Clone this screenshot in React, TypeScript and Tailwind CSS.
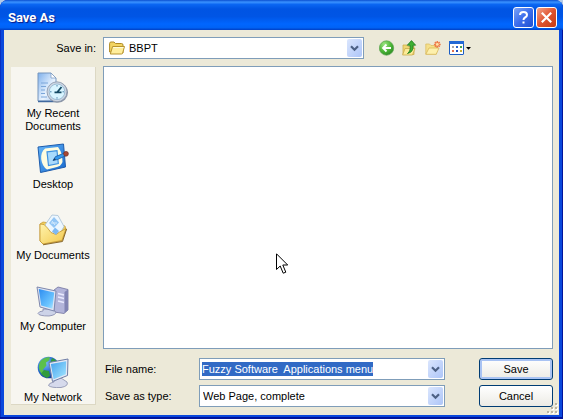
import { useEffect, useRef } from "react";
import type { ReactNode } from "react";

function Chevron() {
  return (
    <span className="pointer-events-none flex h-[18px] w-[15px] shrink-0 items-center justify-center rounded-xs bg-linear-to-br from-[#dbe6fd] to-[#adc5f8]">
      <svg width="9" height="7" viewBox="0 0 9 7" aria-hidden="true">
        <path d="M1 1.2 4.5 4.7 8 1.2" fill="none" stroke="#4d6185" strokeWidth="2.2" />
      </svg>
    </span>
  );
}

function FolderIcon() {
  return (
    <svg width="16" height="16" viewBox="0 0 16 16" aria-hidden="true">
      <path d="M.6 12V3.5Q.6 2 2 2H5L6.5 3.5H12.5Q14 3.5 14 5V13Z" fill="#f3d461" stroke="#b08b28" />
      <path d="M1.3 14 3.6 6.5H15.5L13.6 13.2Q13.4 14 12.6 14Z" fill="#ffee9c" stroke="#b8942f" />
      <path d="M4.2 7.5H14.4" stroke="#fffbd8" />
    </svg>
  );
}

function BackIcon() {
  return (
    <svg width="16" height="16" viewBox="0 0 16 16" aria-hidden="true">
      <defs>
        <radialGradient id="back" cx="35%" cy="25%" r="80%">
          <stop offset="0" stopColor="#9be382" />
          <stop offset=".6" stopColor="#4bb535" />
          <stop offset="1" stopColor="#2c8a25" />
        </radialGradient>
      </defs>
      <circle cx="7.5" cy="8" r="7.2" fill="url(#back)" stroke="#5ba350" strokeWidth=".7" />
      <path d="M7.5 4.5 4 8 7.5 11.5M4.5 8H12" fill="none" stroke="#fff" strokeWidth="1.8" />
    </svg>
  );
}

function UpIcon() {
  return (
    <svg width="16" height="16" viewBox="0 0 16 16" aria-hidden="true">
      <path d="M1 5H5L6 6.5H12V14.5H1Z" fill="#f0d673" stroke="#cfae4c" strokeWidth=".8" />
      <path d="M.6 15 3 8.5H13L10.5 15Z" fill="#fbea96" stroke="#c9aa4c" strokeWidth=".8" />
      <path d="M5.5 13.5Q9 11 8 5.2H5.3L9.5.6 13.6 5.2H11Q12 12 5.5 13.5Z" fill="#3fb032" stroke="#1b7a1a" strokeWidth=".8" />
    </svg>
  );
}

function NewFolderIcon() {
  return (
    <svg width="17" height="16" viewBox="0 0 17 16" aria-hidden="true">
      <path d="M.8 14V4H4.5L6 5.5H11.5V14Z" fill="#f5e08a" stroke="#dcbf66" strokeWidth=".8" />
      <path d="M.8 14.3 4 8H14L11.2 14.3Z" fill="#fdf0ac" stroke="#d8b757" strokeWidth=".8" />
      <path d="M12.3 1V7.8M8.9 4.4H15.7M9.9 2 14.7 6.8M14.7 2 9.9 6.8" stroke="#ee7a48" strokeWidth="1.5" />
      <circle cx="12.3" cy="4.4" r="1.4" fill="#ffe2a8" />
    </svg>
  );
}

function ViewsIcon() {
  return (
    <svg width="23" height="16" viewBox="0 0 23 16" aria-hidden="true">
      <rect x=".5" y="1.5" width="14" height="13" rx=".5" fill="#fff" stroke="#1b5dc4" />
      <path d="M0 1H15V4H0Z" fill="#2268d4" />
      <path d="M3 6H5V8H3Z" fill="#a8a8a8" />
      <path d="M7 6H9V8H7Z" fill="#2d63c8" />
      <path d="M11 6H13V8H11Z" fill="#46a34b" />
      <path d="M3 10H5V12H3Z" fill="#e0704f" />
      <path d="M7 10H9V12H7Z" fill="#1f4dc0" />
      <path d="M11 10H13V12H11Z" fill="#c9ae31" />
      <path d="M17 7H22L19.5 9.8Z" fill="#000" />
    </svg>
  );
}

function RecentIcon() {
  return (
    <svg width="32" height="32" viewBox="0 0 32 32" aria-hidden="true">
      <defs>
        <linearGradient id="page" x1="0" y1="0" x2="1" y2="1">
          <stop offset="0" stopColor="#7eb0ec" />
          <stop offset=".6" stopColor="#eaf4ff" />
          <stop offset="1" stopColor="#a9c8ee" />
        </linearGradient>
      </defs>
      <path d="M1 1H14L19 6V29H1Z" fill="url(#page)" stroke="#7796bd" />
      <path d="M1 29.5H20" stroke="#41699f" strokeWidth="1.5" />
      <path d="M14 1V6H19Z" fill="#fff" stroke="#7796bd" strokeWidth=".7" />
      <path d="M4 11H11M4 14.5H9M4 18H8M4 21.5H8M4 25H10" stroke="#7ba6d9" strokeWidth="1.2" />
      <circle cx="20.8" cy="20.6" r="10.2" fill="#8d97a7" />
      <circle cx="20" cy="19.8" r="10" fill="#ccd5e2" stroke="#8896aa" strokeWidth=".8" />
      <circle cx="20" cy="19.8" r="7.8" fill="#d9f5ff" stroke="#8fb2cd" strokeWidth=".8" />
      <path d="M20 13V14.5M20 25.2V26.7M13 19.8H14.5M25.5 19.8H27" stroke="#4f86ad" />
      <path d="M24.5 15 20 20.5M24.5 20.3H17.5" stroke="#154a63" strokeWidth="1.8" />
    </svg>
  );
}

function DesktopIcon() {
  return (
    <svg width="32" height="32" viewBox="0 0 32 32" aria-hidden="true">
      <defs>
        <linearGradient id="desk" x1="0" y1="0" x2="1" y2="1">
          <stop offset="0" stopColor="#65b6fa" />
          <stop offset="1" stopColor="#1669cd" />
        </linearGradient>
      </defs>
      <path d="M1 4 26.5 1 28.5 24 3.5 29.5Z" fill="url(#desk)" stroke="#1d5cad" />
      <path d="M8 5.5 21 4Q24 8 25 12L25.5 19Q24 23 20 24L10 26.5Q5 23 4.2 16 3.7 9 8 5.5Z" fill="#fffde0" />
      <path d="M10 8.8 20 7.6 21.3 20.5 11.5 22.5Z" fill="#a9dafc" stroke="#3f92e0" strokeWidth="1.2" />
      <path d="M16 17.5 18.5 13.6 28 9.8 29.7 12.3 20.5 16.5Z" fill="#3598ed" stroke="#1c579d" strokeWidth=".8" />
      <path d="M16 17.5 17.7 15 18.8 16.7Z" fill="#183d62" />
      <circle cx="29" cy="10.8" r="2.4" fill="#a94835" stroke="#743123" strokeWidth=".7" />
    </svg>
  );
}

function DocumentsIcon() {
  return (
    <svg width="32" height="32" viewBox="0 0 32 32" aria-hidden="true">
      <defs>
        <linearGradient id="docs" x1="0" y1="0" x2="1" y2="1">
          <stop offset="0" stopColor="#fff3ac" />
          <stop offset="1" stopColor="#f2c84c" />
        </linearGradient>
      </defs>
      <path d="M3 10 6 8 12 9 28 12 29 16 25 27 6 30 3 27Z" fill="#f2cf5c" stroke="#c79f3d" strokeWidth=".8" />
      <path d="M8 11 15 1 21 1.5 27 12.5 20 25 9 19Z" fill="#edf7ff" stroke="#a6bfd4" strokeWidth=".8" />
      <path d="M12 9 17 3 22 8.5 17 14Z" fill="#93c6f5" />
      <path d="M14 9H20M15 7 18 11" stroke="#d6ebfd" />
      <path d="M3 10 7 10.5 10.5 14 14 18.5 19 20.5 22.5 18 29 14.5 25 26.5 6 30 3 27Z" fill="url(#docs)" stroke="#c3962f" strokeWidth=".8" />
      <path d="M15 17.5 18 13.5 22 17 19 21Z" fill="#7db9f3" />
      <path d="M6 30.8 25.5 27.5 29.6 15" fill="none" stroke="#8a6a2e" />
    </svg>
  );
}

function ComputerIcon() {
  return (
    <svg width="34" height="32" viewBox="0 0 34 32" aria-hidden="true">
      <defs>
        <linearGradient id="pc" x1="0" y1="0" x2="1" y2="1">
          <stop offset="0" stopColor="#2d8cf0" />
          <stop offset=".7" stopColor="#6cc5ff" />
          <stop offset="1" stopColor="#b7e8ff" />
        </linearGradient>
      </defs>
      <path d="M18 5 22 2 32 4.5V25L28 28.5 18 27Z" fill="#b3b5da" stroke="#72749f" strokeWidth=".8" />
      <path d="M28.5 7 32 4.5V25L28.5 28Z" fill="#8184b3" />
      <path d="M22 8.5 28 10M22 12 28 13.5M22 16 28 17.5" stroke="#e9eaff" strokeWidth="1.3" />
      <path d="M7 24 15 24 20 27Q20 30 13 31 3 31 2 28.5 3 26 7 26Z" fill="#cdd3e8" stroke="#8287a9" strokeWidth=".8" />
      <path d="M1 2 20 6 18 26 4 22Z" fill="#dfe4f3" stroke="#7e88ad" />
      <path d="M2.8 4 18.2 7.4 16.4 23.8 5.2 20.6Z" fill="url(#pc)" />
    </svg>
  );
}

function NetworkIcon() {
  return (
    <svg width="34" height="32" viewBox="0 0 34 32" aria-hidden="true">
      <defs>
        <radialGradient id="globe" cx="35%" cy="30%" r="75%">
          <stop offset="0" stopColor="#82bdfc" />
          <stop offset=".6" stopColor="#2468cf" />
          <stop offset="1" stopColor="#153b94" />
        </radialGradient>
        <linearGradient id="net" x1="0" y1="0" x2="1" y2="1">
          <stop offset="0" stopColor="#43a1ee" />
          <stop offset="1" stopColor="#a6e8ff" />
        </linearGradient>
      </defs>
      <circle cx="12.5" cy="11.5" r="10.8" fill="url(#globe)" />
      <path d="M4.5 5Q9 .5 14 1.3L13 4.5 10 6.5 10.5 9.5 7 13.5 9 17.5 6 18.5Q.5 12.5 4.5 5Z" fill="#5cc04b" />
      <path d="M16 2Q21 4 22.5 8L18 10 14 7ZM8 14 13 15 14 20 11 22Q7 20.5 5 17.5Z" fill="#319b3c" />
      <path d="M18 23 25 22 31 26Q33 30 25 31.5 15 32 12.5 29.5 12.5 27 18 26Z" fill="#d6daec" stroke="#888eac" strokeWidth=".8" />
      <path d="M13 6.5 32 3 31.5 19.5 16.5 25.5Z" fill="#e4e9f5" stroke="#6f7da5" />
      <path d="M14.8 8.1 30.2 5.2 29.8 18.3 17.6 23.3Z" fill="url(#net)" />
    </svg>
  );
}

const places: { name: string; lines: string[]; icon: ReactNode }[] = [
  { name: "recent", lines: ["My Recent", "Documents"], icon: <RecentIcon /> },
  { name: "desktop", lines: ["Desktop"], icon: <DesktopIcon /> },
  { name: "documents", lines: ["My Documents"], icon: <DocumentsIcon /> },
  { name: "computer", lines: ["My Computer"], icon: <ComputerIcon /> },
  { name: "network", lines: ["My Network"], icon: <NetworkIcon /> },
];

export default function App() {
  const fileName = useRef<HTMLInputElement>(null);

  useEffect(() => {
    fileName.current?.focus();
    fileName.current?.select();
  }, []);

  return (
    <div className="flex min-h-screen flex-col bg-[#b4cbe8] font-['Liberation_Sans',Arial,sans-serif] text-[11px] leading-[13px] text-black">
      <div className="flex flex-1 flex-col rounded-t-lg bg-[#0a48dc] shadow-[inset_-1px_-2px_0_#00149c,inset_1px_0_0_#0a2fc0]">
        <header className="flex h-[30px] items-center justify-between rounded-t-lg bg-[linear-gradient(to_bottom,#0a4fd0_0%,#3a92ff_7%,#0a66f2_15%,#0054e3_30%,#0055e5_55%,#0066ff_80%,#0062f5_92%,#003fc4_100%)] pt-1 pr-[6px] pl-2">
          <h1 className="font-[Roboto,sans-serif] text-[13px] font-bold text-white [text-shadow:1px_1px_1px_#0a1883]">Save As</h1>
          <div className="flex gap-[2px]">
            <button type="button" aria-label="Help" className="flex size-[21px] items-center justify-center rounded-[3px] border border-white bg-linear-to-br from-[#7ba2f5] via-[#3c6dec] to-[#1f4fd0]">
              <svg width="15" height="15" viewBox="0 0 15 15" aria-hidden="true">
                <path d="M4 5Q4 2 7.5 2T11 5Q11 6.6 9 7.5 7.5 8.3 7.5 10" fill="none" stroke="#fff" strokeWidth="2" />
                <path d="M6.5 11.5H8.5V13.5H6.5Z" fill="#fff" />
              </svg>
            </button>
            <button type="button" aria-label="Close" className="flex size-[21px] items-center justify-center rounded-[3px] border border-white bg-linear-to-br from-[#f0a188] via-[#e0532f] to-[#c43a12]">
              <svg width="13" height="13" viewBox="0 0 13 13" aria-hidden="true">
                <path d="M1.8 1.8 11.2 11.2M11.2 1.8 1.8 11.2" stroke="#fff" strokeWidth="2.2" />
              </svg>
            </button>
          </div>
        </header>

        <main className="relative mx-1 mb-1 flex flex-1 flex-col bg-[#ece9d8] pt-[7px] pr-[6px] pb-2">
          <div className="flex items-center">
            <label htmlFor="folder" className="w-[92px] text-right">Save in:</label>
            <div className="ml-[7px] grid h-[22px] w-[261px] grid-cols-1 items-center border border-[#7f9db9] bg-white pr-px">
              <select id="folder" className="col-start-1 row-start-1 h-5 w-full appearance-none bg-transparent pl-[25px] outline-none">
                <option>BBPT</option>
              </select>
              <span className="pointer-events-none col-start-1 row-start-1 flex items-center justify-between pl-[5px]">
                <FolderIcon />
                <Chevron />
              </span>
            </div>
            <div className="ml-[15px] flex items-center gap-[7px]">
              <button type="button" aria-label="Back"><BackIcon /></button>
              <button type="button" aria-label="Up one level"><UpIcon /></button>
              <button type="button" aria-label="Create new folder"><NewFolderIcon /></button>
              <button type="button" aria-label="Views"><ViewsIcon /></button>
            </div>
          </div>

          <div className="mt-[7px] flex flex-1 gap-[7px]">
            <nav className="mt-px mb-[2px] ml-[7px] w-[85px] shrink-0 border-r border-b border-[#dcd8c4] bg-[#f7f6f0] pt-[5px]">
              {places.map((place) => (
                <button key={place.name} type="button" className="flex h-[71px] w-full flex-col items-center gap-[3px] last:h-auto">
                  {place.icon}
                  <span>
                    {place.lines.map((line) => (
                      <span key={line} className="block whitespace-nowrap">{line}</span>
                    ))}
                  </span>
                </button>
              ))}
            </nav>

            <div className="flex flex-1 flex-col">
              <div role="listbox" aria-label="Files" className="min-h-[120px] flex-1 border border-[#7f9db9] bg-white" />
              <div className="mt-[9px] grid grid-cols-[96px_1fr_74px] items-center gap-y-[5px]">
                <label htmlFor="file-name" className="pl-[2px]">File name:</label>
                <div className="mr-[34px] flex h-[22px] items-center border border-[#7f9db9] bg-white pr-px pl-[2px]">
                  <input
                    id="file-name"
                    ref={fileName}
                    type="text"
                    autoComplete="off"
                    spellCheck={false}
                    defaultValue="Fuzzy Software  Applications menu"
                    className="min-w-0 flex-1 bg-white leading-[14px] outline-none selection:bg-[#316ac5] selection:text-white"
                  />
                  <Chevron />
                </div>
                <button type="submit" className="h-[22px] rounded-[3px] border border-[#003c74] bg-linear-to-b from-white to-[#ecebe5] shadow-[inset_0_0_0_2px_#a9c3f3]">Save</button>

                <label htmlFor="file-type" className="pl-[2px]">Save as type:</label>
                <div className="mr-[34px] grid h-[22px] grid-cols-1 items-center border border-[#7f9db9] bg-white pr-px">
                  <select id="file-type" className="col-start-1 row-start-1 h-5 w-full appearance-none bg-transparent pl-[3px] outline-none">
                    <option>Web Page, complete</option>
                  </select>
                  <span className="pointer-events-none col-start-1 row-start-1 flex justify-end">
                    <Chevron />
                  </span>
                </div>
                <button type="button" className="h-[22px] rounded-[3px] border border-[#003c74] bg-linear-to-b from-white to-[#ecebe5]">Cancel</button>
              </div>
            </div>
          </div>

          <svg className="absolute right-px bottom-px" width="12" height="12" viewBox="0 0 12 12" aria-hidden="true">
            <path d="M9 1H11V3H9ZM9 5H11V7H9ZM5 5H7V7H5ZM9 9H11V11H9ZM5 9H7V11H5ZM1 9H3V11H1Z" fill="#b8b4a2" />
            <path d="M11 3V2H12V4H10V3ZM11 7V6H12V8H10V7ZM7 7V6H8V8H6V7ZM11 11V10H12V12H10V11ZM7 11V10H8V12H6V11ZM3 11V10H4V12H2V11Z" fill="#fff" />
          </svg>
        </main>
      </div>

      <svg className="pointer-events-none absolute top-[253px] left-[276px]" width="13" height="22" viewBox="0 0 13 22" aria-hidden="true">
        <path d="M.5.8V16.5L4.2 13 7.2 20.2 9.8 19.2 6.8 12H11.7Z" fill="#fff" stroke="#000" />
      </svg>
    </div>
  );
}
